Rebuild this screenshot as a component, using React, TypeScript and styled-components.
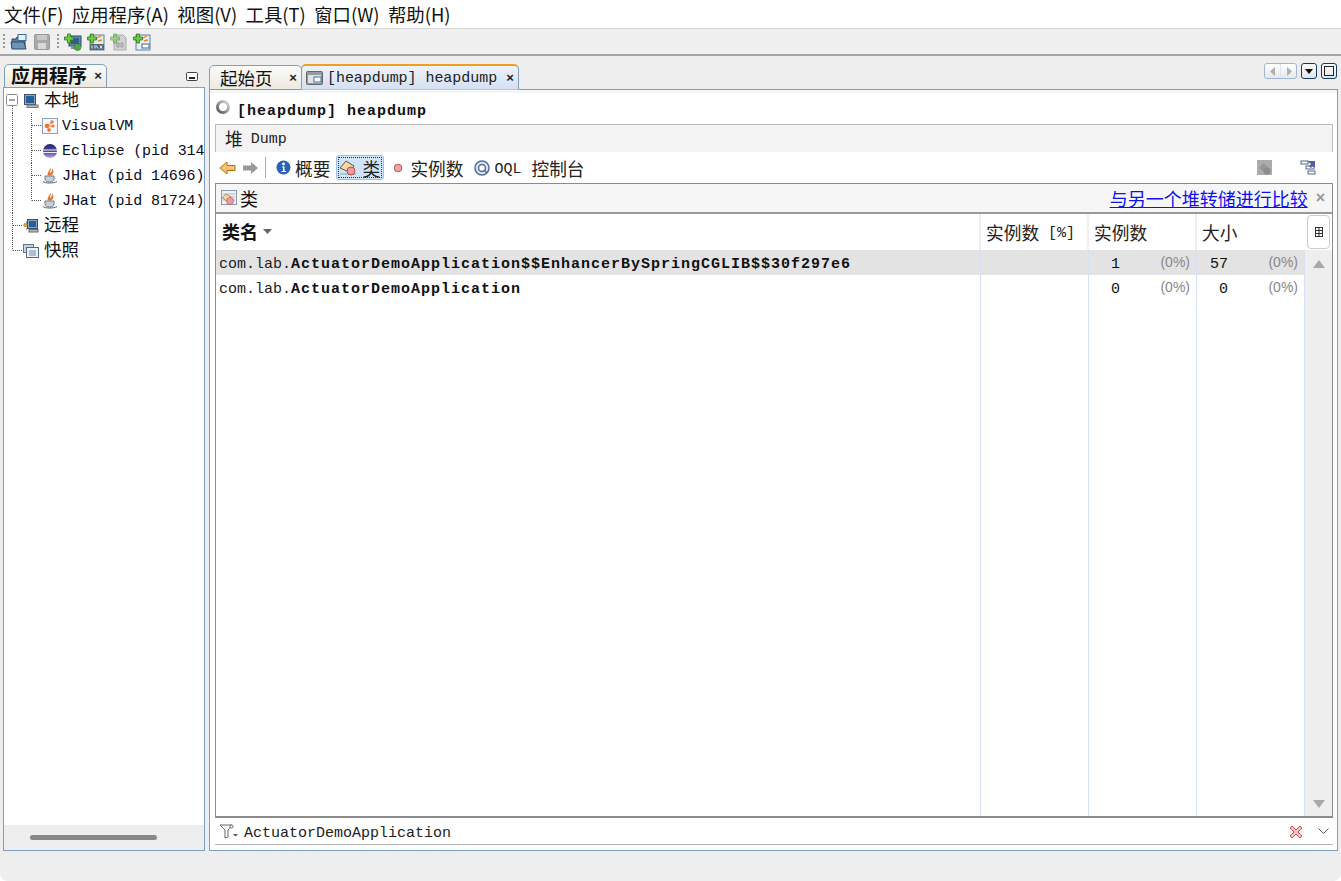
import React from 'react';
import styled, { createGlobalStyle } from 'styled-components';

const Global = createGlobalStyle`
  html, body { margin: 0; padding: 0; background: #fff; }
  * { box-sizing: border-box; }
`;

const mono = `"Liberation Mono", "Noto Sans CJK SC", monospace`;
const cjk = `"Noto Sans CJK SC", "Liberation Sans", sans-serif`;

const Page = styled.div`
  width: 1341px; height: 881px; display: flex; flex-direction: column;
  background: #eeeeee; overflow: hidden; border-radius: 0 0 8px 8px;
  font-family: ${mono}; font-size: 15px; color: #000;
`;
const MenuBar = styled.div`
  height: 29px; background: #fff; display: flex; align-items: center; gap: 8.4px; padding: 0 0 0 4px;
  border-bottom: 1px solid #d8d8d8;
`;
const MenuItem = styled.span`
  font-family: ${cjk}; font-size: 18.4px; line-height: 29px; white-space: nowrap; color: #111;
`;
const ToolStrip = styled.div`
  height: 27px; background: #f0f0f0; display: flex; align-items: center; padding-left: 3px;
  border-bottom: 2px solid #a6a6a6;
`;
const Grip = styled.span`
  width: 2px; height: 15px; margin: 0 5px 0 0; flex: none;
  background: repeating-linear-gradient(to bottom, #999 0 2px, transparent 2px 4px);
`;
const ToolIcon = styled.span<{ $gap?: number }>`
  width: 18px; height: 18px; margin-right: ${p => p.$gap ?? 5}px; display: inline-flex; flex: none;
  svg { display: block; }
`;
const Workspace = styled.div`
  flex: 1; display: flex; gap: 4px; padding: 8px 3px 30px 3px; min-height: 0;
`;
const LeftColumn = styled.div`
  width: 202px; flex: none; display: flex; flex-direction: column;
`;
const RightColumn = styled.div`
  flex: 1; min-width: 0; display: flex; flex-direction: column;
`;
const TabRow = styled.div<{ $h: number; $indent?: number }>`
  height: ${p => p.$h}px; display: flex; align-items: flex-end; flex: none; position: relative;
  padding-left: ${p => p.$indent ?? 0}px; margin-bottom: -1px; z-index: 1;
`;
const Tab = styled.div<{ $w: number; $active?: boolean; $h?: number; $pad?: number; $shift?: number }>`
  width: ${p => p.$w}px; height: ${p => p.$h ?? 25}px; flex: none; display: flex; align-items: center;
  border: 1px solid #7f9fbf; border-radius: 5px 5px 0 0;
  border-bottom: 1px solid ${p => (p.$active ? '#b5c8e4' : '#7f9fbf')};
  background: ${p => (p.$active ? 'linear-gradient(#eef3fb, #d4e0f3)' : 'linear-gradient(#fbfbf8, #ece9e0)')};
  ${p => p.$active && 'border-top: 2px solid #f0a020;'}
  padding-left: ${p => p.$pad ?? 10}px; margin-left: ${p => p.$shift ?? 0}px; white-space: nowrap;
`;
const TabHan = styled.span<{ $bold?: boolean }>`
  font-family: ${cjk}; font-size: ${p => (p.$bold ? 19 : 17.5)}px; font-weight: ${p => (p.$bold ? 600 : 400)};
  line-height: 22px; color: #111; padding-bottom: ${p => (p.$bold ? 2 : 0)}px;
`;
const TabClose = styled.span`
  margin-left: auto; margin-right: 3px; width: 10px; text-align: center; font-size: 13px; line-height: 12px;
  font-family: "Liberation Sans", sans-serif; font-weight: 700; color: #222;
`;
const TabText = styled.span`
  margin-left: 4px; margin-top: 3px; font-size: 15px; letter-spacing: -.05px; line-height: 20px; color: #222;
`;
const CornerControls = styled.div`
  margin-left: auto; margin-top: -1px; display: flex; align-items: flex-start; gap: 4px; align-self: flex-start; padding-right: 1px;
`;
const MinimizeSlot = styled.div`
  margin-left: auto; align-self: flex-start; padding: 8px 7px 0 0; display: flex;
`;
const NavGroup = styled.div`
  width: 33px; height: 16px; border: 1px solid #9db6d4; border-radius: 3px; display: flex;
  background: linear-gradient(#fff, #e8e8e8);
  & > span { flex: 1; display: flex; align-items: center; justify-content: center; }
  & > span + span { border-left: 1px solid #dfe6ef; }
`;
const CornerButton = styled.div`
  width: 16px; height: 16px; border: 1px solid #0e3a68; border-radius: 3px; display: flex;
  align-items: center; justify-content: center; background: linear-gradient(#fff, #e4e4e4);
`;
const SidePanel = styled.div`
  flex: 1; min-height: 0; border: 1px solid #7f9fbf; background: #fff; display: flex; flex-direction: column;
`;
const Tree = styled.div`
  flex: 1; overflow: hidden;
`;
const TreeRow = styled.div`
  height: 25px; display: flex; align-items: center; white-space: nowrap; overflow: hidden;
`;
const Label = styled.span`
  margin-left: 4px; padding-top: 2px; font-size: 15px; letter-spacing: -.1px; line-height: 22px; color: #0a0a1a;
`;
const HanLabel = styled.span`
  margin-left: 5px; padding-bottom: 4px; font-family: ${cjk}; font-size: 17.5px; line-height: 20px; color: #111;
`;
const Guide = styled.svg`
  flex: none; display: block;
`;
const HScroll = styled.div`
  height: 25px; flex: none; background: #eeeeee; display: flex; align-items: center; padding-left: 26px;
`;
const HThumb = styled.div`
  width: 127px; height: 5px; border-radius: 3px; background: #888;
`;
const MainPanel = styled.div`
  flex: 1; min-height: 0; border: 1px solid #7f9fbf; background: #fff; display: flex; flex-direction: column;
  padding: 0 4px 5px 5px; box-shadow: inset 0 3px 0 #f5f6f8;
`;
const TitleRow = styled.div`
  height: 34px; display: flex; align-items: center; padding: 7px 0 0 0; flex: none;
`;
const SpinnerSlot = styled.span`
  display: flex; margin-bottom: 7px;
`;
const TitleText = styled.span`
  margin-left: 6px; margin-top: 2px; font-weight: 700; font-size: 15px; letter-spacing: 1px; color: #111;
`;
const SubBar = styled.div`
  height: 28px; flex: none; background: #f3f3f3; border: 1px solid #bcbcbc; border-bottom: 0;
  display: flex; align-items: center; padding: 0 0 1px 9px; white-space: nowrap;
`;
const SmallHan = styled.span<{ $l?: number }>`
  margin-left: ${p => p.$l ?? 0}px; font-family: ${cjk}; font-size: 17.7px; line-height: 24px; color: #222;
`;
const SubLatin = styled.span<{ $l?: number; $t?: number }>`
  margin-left: ${p => p.$l ?? 0}px; margin-top: ${p => p.$t ?? 2}px; font-size: 15px; color: #222;
`;
const ViewBar = styled.div`
  height: 31px; flex: none; display: flex; align-items: center; padding-left: 4px; white-space: nowrap;
`;
const Divider = styled.span`
  width: 1px; height: 21px; background: #aaa; margin: 0 8px 0 6px; flex: none;
`;
const Spacer = styled.span<{ $w: number }>`
  width: ${p => p.$w}px; flex: none;
`;
const ViewItem = styled.div<{ $active?: boolean; $w?: number; $gap?: number }>`
  display: flex; align-items: center; gap: ${p => p.$gap ?? 4}px; height: 25px; padding: 0 2px;
  ${p => p.$w ? `width: ${p.$w}px; flex: none;` : ''}
  ${p => p.$active ? `
    background: #cfe4f8; border: 1px solid #9cc2e6; border-radius: 3px; outline: 1px dotted #333; outline-offset: -3px;
  ` : ''}
`;
const ViewEnd = styled.div`
  margin-left: auto; display: flex; gap: 27px; padding-right: 16px;
`;
const ClassFrame = styled.div`
  flex: 1; min-height: 0; border: 1px solid #8c8c8c; display: flex; flex-direction: column; border-bottom-width: 2px;
`;
const ClassHeader = styled.div`
  height: 30px; flex: none; background: #f6f6f6; display: flex; align-items: center; padding: 0 7px 0 5px;
  border-bottom: 2px solid #9a9a9a;
`;
const CompareLink = styled.a`
  margin-left: auto; font-family: ${cjk}; font-size: 18px; color: #1010ee; text-decoration: underline; line-height: 24px;
`;
const CloseMark = styled.span`
  margin-left: 8px; color: #999; font-family: "Liberation Sans", sans-serif; font-size: 16px; font-weight: 700; line-height: 16px;
`;
const TableArea = styled.div`
  flex: 1; min-height: 0; display: flex;
`;
const TableMain = styled.div`
  width: 1089px; flex: none; display: flex; flex-direction: column;
`;
const Cols = styled.div`
  display: grid; grid-template-columns: 765px 108px 108px 108px;
`;
const HeadRow = styled(Cols)`
  height: 36px; flex: none;
`;
const HeadCell = styled.div`
  display: flex; align-items: center; padding-left: 5px; border-right: 2px solid #eeeeee; white-space: nowrap;
  &:first-child { padding: 0 0 2px 6px; }
  &:last-child { border-right: 0; }
`;
const BoldHan = styled.span<{ $plain?: boolean; $l?: number }>`
  margin-left: ${p => p.$l ?? 0}px;
  font-family: ${cjk}; font-size: 18px; font-weight: ${p => (p.$plain ? 400 : 600)}; line-height: 24px; color: #111;
`;
const SortMark = styled.span`
  margin-left: 4px; display: flex;
`;
const DataRow = styled(Cols)<{ $selected?: boolean }>`
  height: 25px; flex: none; background: ${p => (p.$selected ? '#e3e3e3' : '#fff')};
`;
const FillRow = styled(Cols)`
  flex: 1;
`;
const Cell = styled.div`
  border-right: 1px solid #d6e0f4; display: flex; align-items: center; white-space: nowrap;
`;
const NameCell = styled(Cell)`
  padding: 4px 0 0 3px;
`;
const Pkg = styled.span`
  font-size: 15px; color: #222;
`;
const Cls = styled.span`
  font-size: 15px; font-weight: 700; letter-spacing: 1px; color: #111;
`;
const NumCell = styled(Cell)`
  padding: 4px 6px 0 0;
`;
const Num = styled.span`
  width: 31px; text-align: right; font-size: 15px; color: #111;
`;
const Pct = styled.span`
  margin-left: auto; margin-bottom: 5px; font-family: "Liberation Sans", sans-serif; font-size: 14px; color: #888;
`;
const VScroll = styled.div`
  flex: 1; background: #eeeeee; display: flex; flex-direction: column; align-items: center;
`;
const CornerHead = styled.div`
  width: 100%; height: 36px; flex: none; background: #fff; padding: 1px 2px; display: flex;
`;
const CornerInner = styled.div`
  flex: 1; border: 1px solid #ccc; border-radius: 4px; display: flex; align-items: center; justify-content: center;
`;
const ArrowTop = styled.span`
  margin-top: 10px; width: 0; height: 0; border-left: 6px solid transparent; border-right: 6px solid transparent; border-bottom: 8px solid #a8a8a8;
`;
const ArrowBottom = styled.span`
  margin-top: auto; margin-bottom: 8px; width: 0; height: 0; border-left: 6px solid transparent; border-right: 6px solid transparent; border-top: 8px solid #a8a8a8;
`;
const FilterRow = styled.div`
  height: 27px; flex: none; display: flex; align-items: center; padding: 1px 4px 0 4px; border-bottom: 1px solid #b4b4b4;
`;
const FilterText = styled.span`
  margin-left: 5px; margin-top: 3px; font-size: 15px; color: #222;
`;
const FilterEnd = styled.div`
  margin-left: auto; display: flex; align-items: center; gap: 15px;
`;

const S = ({ children, w = 18, h = 18 }: { children: React.ReactNode; w?: number; h?: number }) => (
  <svg width={w} height={h} viewBox={`0 0 ${w} ${h}`} style={{ flex: 'none', display: 'block' }}>{children}</svg>
);

const Plus = () => (
  <path d="M3 0.5h3v3h3v3H6v3H3v-3H0v-3h3z" fill="#6fcb3f" stroke="#2b7a1c" strokeWidth=".8" transform="translate(.5 .5)" />
);

const OpenIcon = () => (
  <S><path d="M2 6h4l1-2h3v3h5v8H2z" fill="#5e7f9e" stroke="#2c4a68" /><rect x="8" y="1.5" width="8" height="6" fill="#e6eef6" stroke="#3d6a96" /><path d="M1 9h13l2 7H2z" fill="#6f93b5" stroke="#2c4a68" /></S>
);
const SaveIcon = () => (
  <S><rect x="1.5" y="1.5" width="15" height="15" rx="1" fill="#a9a9a9" stroke="#999" /><rect x="4" y="2" width="10" height="5" fill="#c8c8c8" /><rect x="5" y="10" width="8" height="6" fill="#d8d8d8" /></S>
);
const AddHostIcon = () => (
  <S><rect x="5" y="3" width="12" height="10" fill="#6a89a5" stroke="#2d4a66" /><rect x="7" y="5" width="8" height="6" fill="#2f5f8e" /><rect x="7" y="14" width="8" height="2" fill="#889" /><circle cx="13.5" cy="14" r="3.5" fill="#52a54a" stroke="#2c6f28" strokeWidth=".6" /><Plus /></S>
);
const AddJmxIcon = () => (
  <S><rect x="3" y="2" width="14" height="15" fill="#e4e8ee" stroke="#6a7f95" /><path d="M10 5l4-2M11 8l4-1" stroke="#e08a20" strokeWidth="1.3" /><rect x="3" y="11" width="14" height="6" fill="#56677c" /><path d="M5 12.5v3M8 12.5v3M9 12.5l2 3M13 12.5l2 3M15 12.5l-2 3" stroke="#fff" strokeWidth=".9" /><Plus /></S>
);
const AddCoreIcon = () => (
  <S><path d="M4 2h9l3 3v12H4z" fill="#d2d2d2" stroke="#aaa" /><path d="M7 10h2v4H7zM11 10h2v4h-2z" fill="none" stroke="#999" /><g opacity=".55"><Plus /></g></S>
);
const AddSnapIcon = () => (
  <S><rect x="3" y="2" width="14" height="15" fill="#e8eef6" stroke="#5d80a8" /><path d="M10 5l4-2M11 8l4-1" stroke="#e08a20" strokeWidth="1.3" /><rect x="9" y="11" width="7" height="4" fill="#fff" stroke="#3d6a96" /><Plus /></S>
);

const RootGuide = ({ mode }: { mode: 'open' | 'mid' | 'last' }) => (
  <Guide width="19" height="25">
    {mode === 'open' && (
      <>
        <rect x="2.5" y="6.5" width="11" height="11" rx="1" fill="#fff" stroke="#8a8a8a" />
        <path d="M5 12h6" stroke="#444" />
        <path d="M8.5 18v7" stroke="#555" strokeDasharray="1 1" />
      </>
    )}
    {mode === 'mid' && <path d="M8.5 0v25M9 12.5h10" stroke="#555" strokeDasharray="1 1" />}
    {mode === 'last' && <path d="M8.5 0v12.5M9 12.5h10" stroke="#555" strokeDasharray="1 1" />}
  </Guide>
);
const ChildGuide = ({ last }: { last?: boolean }) => (
  <Guide width="38" height="25">
    <path d="M8.5 0v25" stroke="#555" strokeDasharray="1 1" />
    <path d={last ? 'M27.5 0v12.5M28 12.5h10' : 'M27.5 0v25M28 12.5h10'} stroke="#555" strokeDasharray="1 1" />
  </Guide>
);

const HostIcon = () => (
  <S w={16} h={16}><rect x="1.5" y="1.5" width="11" height="10" fill="#8fa6bc" stroke="#3d4f60" /><rect x="3" y="3" width="8" height="7" fill="#25609c" /><rect x="4" y="12" width="11" height="2.5" fill="#bbb" stroke="#777" /></S>
);
const VvmIcon = () => (
  <S w={16} h={16}><rect x=".5" y=".5" width="15" height="15" fill="#f3f6fa" stroke="#8fa4ba" /><circle cx="10" cy="4" r="1.7" fill="#ef7d2e" /><circle cx="5" cy="8" r="2.2" fill="#ef6c22" /><circle cx="11" cy="8" r="1.6" fill="#ef7d2e" /><circle cx="7" cy="12" r="1.8" fill="#ef6c22" /><path d="M5 8l5-4M5 8h6M5 8l2 4" stroke="#ef7d2e" /></S>
);
const EclipseIcon = () => (
  <S w={16} h={16}>
    <defs><linearGradient id="ec" x1="0" x2="0" y1="0" y2="1"><stop offset="0" stopColor="#1c2a6a" /><stop offset=".6" stopColor="#5a4aa8" /><stop offset="1" stopColor="#c0a8e0" /></linearGradient></defs>
    <circle cx="8" cy="8" r="7" fill="url(#ec)" /><path d="M1 7h14M1 9.500h14" stroke="#eee" strokeWidth="1" />
  </S>
);
const JavaIcon = () => (
  <S w={16} h={16}><path d="M8 0c2.500 2-1.500 3 .5 5.500 0-2 2.500-2 1.500-5 2.500 2 1.500 5-.5 7H6C4.500 5 8 2.500 8 0z" fill="#e8742a" /><path d="M3 8h9v3c0 2-2 3-4.500 3S3 13 3 11z" fill="#c9cfd6" stroke="#6f7d8c" /><path d="M1 13.500c2 2 11 2 14 0" stroke="#55667a" fill="none" /></S>
);
const RemoteIcon = () => (
  <S w={16} h={16}><rect x="4.500" y="1.500" width="10" height="9" fill="#8fa6bc" stroke="#3d4f60" /><rect x="6" y="3" width="7" height="6" fill="#25609c" /><rect x="6" y="11.500" width="9" height="2.500" fill="#bbb" stroke="#666" /><circle cx="2.500" cy="7" r="1.800" fill="#e9a43c" stroke="#8a6420" strokeWidth=".5" /><path d="M4 4h-1M4 11H3" stroke="#555" /></S>
);
const SnapIcon = () => (
  <S w={16} h={16}><rect x=".5" y="1.500" width="10" height="8" fill="#c6d4e2" stroke="#5c7690" /><rect x="3.500" y="4.500" width="12" height="10" fill="#eef2f7" stroke="#4f6a86" /><path d="M6 8h7M6 10h7M6 12h7" stroke="#6f8aa5" /></S>
);

const DumpTabIcon = () => (
  <S w={17} h={16}><rect x=".5" y="1.500" width="16" height="13" rx="1" fill="#9a9a9a" stroke="#666" /><rect x="2" y="5" width="13" height="8" fill="#e2e2e2" /><rect x="8" y="7" width="7" height="5" fill="#f4f8fc" stroke="#3f74ab" /></S>
);
const Spinner = () => (
  <S w={16} h={16}>
    <defs><linearGradient id="sp" x1="1" x2="0" y1="0" y2="1"><stop offset="0" stopColor="#ddd" /><stop offset="1" stopColor="#555" /></linearGradient></defs>
    <circle cx="8" cy="8" r="5.500" fill="none" stroke="url(#sp)" strokeWidth="3" />
  </S>
);
const BackIcon = () => (
  <S w={17} h={16}><path d="M1 8l7-6v3.500h8v5H8V14z" fill="#f4c478" stroke="#b06a10" /></S>
);
const FwdIcon = () => (
  <S w={17} h={16}><path d="M16 8L9 2v3.500H1v5h8V14z" fill="#9a9a9a" /></S>
);
const InfoIcon = () => (
  <S w={15} h={15}><circle cx="7.500" cy="7.500" r="7" fill="#2b62b8" /><circle cx="7.500" cy="4" r="1.400" fill="#fff" /><path d="M6 6.500h2.500V11H10v1H5.500v-1H7V7.500H6z" fill="#fff" /></S>
);
const ClassIcon = () => (
  <S w={18} h={16}><path d="M1 8l6-7 8 5-5 6z" fill="#f6d9a0" stroke="#555" /><rect x="1" y="13.500" width="16" height="1" fill="#8aa" /><circle cx="12" cy="11" r="4" fill="#f39a9a" stroke="#b05050" /></S>
);
const InstIcon = () => (
  <S w={10} h={10}><circle cx="5" cy="5" r="3.800" fill="#f2a0a0" stroke="#a85858" /></S>
);
const QueryIcon = () => (
  <S w={16} h={16}><circle cx="8" cy="8" r="7" fill="#dfe7f2" stroke="#506e96" strokeWidth="1.500" /><circle cx="8" cy="8" r="3.500" fill="#fff" stroke="#506e96" strokeWidth="1.500" /><path d="M10 10l3 3" stroke="#506e96" strokeWidth="1.500" /></S>
);
const ClassGrayIcon = () => (
  <S w={17} h={17}><rect x="1" y="1" width="15" height="15" fill="#ababab" /><path d="M3 9l4-5 5 4-4 5z" fill="#979797" /><circle cx="11" cy="12" r="3.500" fill="#8d8d8d" /></S>
);
const TreeExportIcon = () => (
  <S w={17} h={17}><rect x="1" y="2" width="7" height="3" fill="#fff" stroke="#54658a" /><rect x="6" y="7" width="8" height="3" fill="#fff" stroke="#54658a" /><rect x="8" y="12" width="7" height="3" fill="#fff" stroke="#54658a" /><path d="M7 2h8v7l-2-2-2 2-2-2 2-2z" fill="#565f9e" /></S>
);
const ClassHeadIcon = () => (
  <S w={17} h={16}><rect x=".5" y=".5" width="15" height="14" fill="#eef0f2" stroke="#8a9aa8" /><path d="M2 4h12M2 7h12M2 10h12" stroke="#b0bcc6" /><path d="M1 8l4-4 5 3-4 4z" fill="#f4d6a0" stroke="#665" strokeWidth=".6" /><circle cx="9" cy="11" r="3.500" fill="#f29a9a" stroke="#b05050" strokeWidth=".6" /></S>
);
const GridIcon = () => (
  <S w={8} h={10}><rect x=".5" y=".5" width="7" height="9" fill="#fff" stroke="#333" /><path d="M0 3.500h8M0 6.500h8M4 1v8" stroke="#333" /></S>
);
const FilterIcon = () => (
  <S w={20} h={15}><path d="M1 1h12L9 6v7l-3 1V6z" fill="#fff" stroke="#666" /><circle cx="12.500" cy="2.500" r="1.500" fill="#fff" stroke="#666" /><path d="M14 10h5l-2.500 2.500z" fill="#555" /></S>
);
const RedX = () => (
  <S w={14} h={14}><path d="M1 3l2-2 4 4 4-4 2 2-4 4 4 4-2 2-4-4-4 4-2-2 4-4z" fill="#f8c4c4" stroke="#c84848" /></S>
);
const Chevron = () => (
  <S w={11} h={7}><path d="M.5 .5L5.500 5.500 10.500 .5" fill="none" stroke="#555" /></S>
);

const CloseX = () => <TabClose>×</TabClose>;

const Row = ({ name, cls, a, b, selected }: { name: string; cls: string; a: string; b: string; selected?: boolean }) => (
  <DataRow $selected={selected}>
    <NameCell><Pkg>{name}</Pkg><Cls>{cls}</Cls></NameCell>
    <Cell />
    <NumCell><Num>{a}</Num><Pct>(0%)</Pct></NumCell>
    <NumCell><Num>{b}</Num><Pct>(0%)</Pct></NumCell>
  </DataRow>
);

const menus = ['文件(F)', '应用程序(A)', '视图(V)', '工具(T)', '窗口(W)', '帮助(H)'];

export default function App() {
  return (
    <Page>
      <Global />
      <MenuBar>{menus.map(m => <MenuItem key={m}>{m}</MenuItem>)}</MenuBar>
      <ToolStrip>
        <Grip />
        <ToolIcon $gap={5}><OpenIcon /></ToolIcon>
        <ToolIcon $gap={6}><SaveIcon /></ToolIcon>
        <Grip />
        <ToolIcon $gap={5}><AddHostIcon /></ToolIcon>
        <ToolIcon $gap={5}><AddJmxIcon /></ToolIcon>
        <ToolIcon $gap={5}><AddCoreIcon /></ToolIcon>
        <ToolIcon><AddSnapIcon /></ToolIcon>
      </ToolStrip>
      <Workspace>
        <LeftColumn>
          <TabRow $h={24} $indent={1}>
            <Tab $w={103} $h={24} $pad={6}>
              <TabHan $bold>应用程序</TabHan><CloseX />
            </Tab>
            <MinimizeSlot>
              <S w={12} h={9}><rect x=".5" y=".5" width="11" height="8" rx="1" fill="#fff" stroke="#444" /><rect x="3" y="5" width="6" height="2" fill="#222" /></S>
            </MinimizeSlot>
          </TabRow>
          <SidePanel>
            <Tree>
              <TreeRow><RootGuide mode="open" /><HostIcon /><HanLabel>本地</HanLabel></TreeRow>
              <TreeRow><ChildGuide /><VvmIcon /><Label>VisualVM</Label></TreeRow>
              <TreeRow><ChildGuide /><EclipseIcon /><Label>Eclipse (pid 31412)</Label></TreeRow>
              <TreeRow><ChildGuide /><JavaIcon /><Label>JHat (pid 14696)</Label></TreeRow>
              <TreeRow><ChildGuide last /><JavaIcon /><Label>JHat (pid 81724)</Label></TreeRow>
              <TreeRow><RootGuide mode="mid" /><RemoteIcon /><HanLabel>远程</HanLabel></TreeRow>
              <TreeRow><RootGuide mode="last" /><SnapIcon /><HanLabel>快照</HanLabel></TreeRow>
            </Tree>
            <HScroll><HThumb /></HScroll>
          </SidePanel>
        </LeftColumn>
        <RightColumn>
          <TabRow $h={26}>
            <Tab $w={93} $h={25}>
              <TabHan>起始页</TabHan><CloseX />
            </Tab>
            <Tab $w={218} $h={26} $active $pad={4} $shift={-1}>
              <DumpTabIcon /><TabText>[heapdump] heapdump</TabText><CloseX />
            </Tab>
            <CornerControls>
              <NavGroup>
                <span><S w={6} h={9}><path d="M5 0v9L0 4.500z" fill="#b0b0b0" /></S></span>
                <span><S w={6} h={9}><path d="M1 0v9l5-4.500z" fill="#b0b0b0" /></S></span>
              </NavGroup>
              <CornerButton><S w={8} h={5}><path d="M0 0h8L4 5z" fill="#111" /></S></CornerButton>
              <CornerButton><S w={10} h={10}><rect x=".5" y=".5" width="9" height="9" fill="none" stroke="#222" /></S></CornerButton>
            </CornerControls>
          </TabRow>
          <MainPanel>
            <TitleRow><SpinnerSlot><Spinner /></SpinnerSlot><TitleText>[heapdump] heapdump</TitleText></TitleRow>
            <SubBar><SmallHan>堆</SmallHan><SubLatin $l={8}>Dump</SubLatin></SubBar>
            <ViewBar>
              <BackIcon />
              <Spacer $w={6} />
              <FwdIcon />
              <Divider />
              <ViewItem $gap={4}><InfoIcon /><SmallHan>概要</SmallHan></ViewItem>
              <Spacer $w={4} />
              <ViewItem $active $w={48} $gap={5}><ClassIcon /><SmallHan>类</SmallHan></ViewItem>
              <Spacer $w={7} />
              <ViewItem $gap={7}><InstIcon /><SmallHan>实例数</SmallHan></ViewItem>
              <Spacer $w={7} />
              <ViewItem $gap={4}>
                <QueryIcon /><SubLatin $t={3}>OQL</SubLatin><SmallHan $l={6}>控制台</SmallHan>
              </ViewItem>
              <ViewEnd><ClassGrayIcon /><TreeExportIcon /></ViewEnd>
            </ViewBar>
            <ClassFrame>
              <ClassHeader>
                <ClassHeadIcon />
                <BoldHan $plain $l={2}>类</BoldHan>
                <CompareLink href="#">与另一个堆转储进行比较</CompareLink>
                <CloseMark>×</CloseMark>
              </ClassHeader>
              <TableArea>
                <TableMain>
                  <HeadRow>
                    <HeadCell>
                      <BoldHan>类名</BoldHan>
                      <SortMark><S w={11} h={6}><path d="M1 1h9L5.500 6z" fill="#666" /></S></SortMark>
                    </HeadCell>
                    <HeadCell><SmallHan>实例数</SmallHan><SubLatin $l={9}>[%]</SubLatin></HeadCell>
                    <HeadCell><SmallHan>实例数</SmallHan></HeadCell>
                    <HeadCell><SmallHan>大小</SmallHan></HeadCell>
                  </HeadRow>
                  <Row name="com.lab." cls="ActuatorDemoApplication$$EnhancerBySpringCGLIB$$30f297e6" a="1" b="57" selected />
                  <Row name="com.lab." cls="ActuatorDemoApplication" a="0" b="0" />
                  <FillRow><Cell /><Cell /><Cell /><Cell /></FillRow>
                </TableMain>
                <VScroll>
                  <CornerHead><CornerInner><GridIcon /></CornerInner></CornerHead>
                  <ArrowTop />
                  <ArrowBottom />
                </VScroll>
              </TableArea>
            </ClassFrame>
            <FilterRow>
              <FilterIcon />
              <FilterText>ActuatorDemoApplication</FilterText>
              <FilterEnd><RedX /><Chevron /></FilterEnd>
            </FilterRow>
          </MainPanel>
        </RightColumn>
      </Workspace>
    </Page>
  );
}
